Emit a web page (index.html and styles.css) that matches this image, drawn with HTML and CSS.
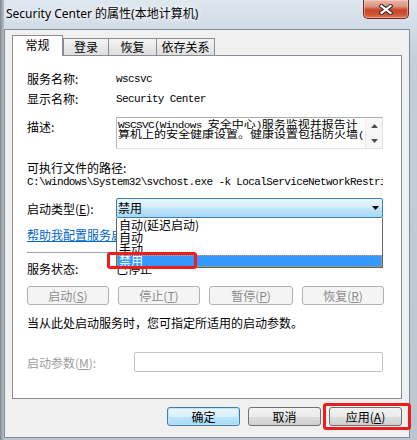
FILE: index.html
```html
<!DOCTYPE html>
<html lang="zh-CN">
<head>
<meta charset="utf-8">
<title>Security Center 的属性(本地计算机)</title>
<link rel="stylesheet" href="styles.css">
</head>
<body>
<div class="window">
  <div class="titlebar">
    <div class="title">Security Center 的属性(本地计算机)</div>
    <div class="close">
      <svg width="14" height="11" viewBox="0 0 14 11">
        <path d="M2.5 2 L11.5 9 M11.5 2 L2.5 9" stroke="#3d2a26" stroke-width="4.2" stroke-linecap="square" fill="none"/>
        <path d="M2.5 2 L11.5 9 M11.5 2 L2.5 9" stroke="#ffffff" stroke-width="2.2" stroke-linecap="square" fill="none"/>
      </svg>
    </div>
  </div>
  <div class="dialog">
    <div class="tabs">
      <div class="tab active">常规</div>
      <div class="tab t-login">登录</div>
      <div class="tab t-recover">恢复</div>
      <div class="tab t-dep">依存关系</div>
    </div>
    <div class="panel">
      <div class="row line20">
        <span class="label">服务名称:</span>
        <span class="mono">wscsvc</span>
      </div>
      <div class="row line20">
        <span class="label">显示名称:</span>
        <span class="mono">Security Center</span>
      </div>
      <div class="row r-desc">
        <span class="label">描述:</span>
        <div class="textarea">
          <div class="ta-text">
            <div class="ta-line"><span class="mono">WSCSVC(Windows </span>安全中心<span class="mono">)</span>服务监视并报告计</div>
            <div class="ta-line">算机上的安全健康设置。健康设置包括防火墙<span class="mono">(</span></div>
          </div>
          <div class="ta-scroll">
            <div class="sb-half"><svg width="7" height="4" viewBox="0 0 7 4"><path d="M0 4 L3.5 0 L7 4 Z" fill="#4d4d4d"/></svg></div>
            <div class="sb-half"><svg width="7" height="4" viewBox="0 0 7 4"><path d="M0 0 L7 0 L3.5 4 Z" fill="#4d4d4d"/></svg></div>
          </div>
        </div>
      </div>
      <div class="path-label">可执行文件的路径:</div>
      <div class="path mono">C:\windows\System32\svchost.exe -k LocalServiceNetworkRestricted</div>
      <div class="row r-start">
        <span class="label">启动类型(<u>E</u>):</span>
        <div class="combo">
          <span class="combo-val">禁用</span>
          <svg class="combo-arrow" width="7" height="4" viewBox="0 0 7 4"><path d="M0 0 L7 0 L3.5 4 Z" fill="#000"/></svg>
          <div class="droplist">
            <div class="opt first">自动(延迟启动)</div>
            <div class="opt">自动</div>
            <div class="opt">手动</div>
            <div class="opt sel">禁用<div class="mark mark-opt"></div></div>
          </div>
        </div>
      </div>
      <div class="link">帮助我配置服务启动选项。</div>
      <div class="sep"></div>
      <div class="row r-status">
        <span class="label">服务状态:</span>
        <span>已停止</span>
      </div>
      <div class="svc-btns">
        <div class="sbtn">启动(<u>S</u>)</div>
        <div class="sbtn">停止(<u>T</u>)</div>
        <div class="sbtn">暂停(<u>P</u>)</div>
        <div class="sbtn">恢复(<u>R</u>)</div>
      </div>
      <div class="hint">当从此处启动服务时，您可指定所适用的启动参数。</div>
      <div class="row r-param">
        <span class="label label-wide disabled">启动参数(<u>M</u>):</span>
        <div class="param-input"></div>
      </div>
    </div>
    <div class="footer">
      <div class="btn default">确定</div>
      <div class="btn">取消</div>
      <div class="btn apply">应用(<u>A</u>)<div class="mark mark-apply"></div></div>
    </div>
  </div>
</div>
</body>
</html>
```
FILE: styles.css
```css
* { box-sizing: border-box; }
html, body { margin: 0; padding: 0; }
body {
  width: 417px;
  height: 440px;
  overflow: hidden;
  font-family: "Noto Sans CJK SC", "Noto Sans", sans-serif;
  font-size: 12px;
  color: #000;
  background:
    linear-gradient(90deg, #80878f 0, #9ea6ae 2px, #b7bfc7 4px, transparent 4px),
    linear-gradient(180deg, #dfe7ef 0, #d2dce6 26px, #c4ced8 60px, #bdc6cf 100%);
}
.window {
  width: 417px;
  height: 440px;
  display: flex;
  flex-direction: column;
}
.titlebar {
  height: 29px;
  flex: none;
  display: flex;
  justify-content: space-between;
  align-items: flex-start;
  padding: 0 8px 0 6px;
}
.title {
  font-family: "Noto Sans", "Noto Sans CJK SC", sans-serif;
  font-size: 12px;
  line-height: 14px;
  margin-top: 7px;
  color: #000;
  text-shadow: 0 0 5px #fff, 0 0 9px #fff;
}
.close {
  width: 46px;
  height: 19px;
  border: 1px solid #6e2a1f;
  border-top: none;
  border-radius: 0 0 5px 5px;
  background: linear-gradient(180deg, #eab7aa 0, #dc9583 35%, #c9452c 55%, #cf5436 80%, #e07b55 100%);
  box-shadow: inset 0 0 0 1px rgba(255, 220, 210, 0.45);
  display: flex;
  align-items: center;
  justify-content: center;
}
.dialog {
  flex: 1;
  margin: 0 7px 2px 4px;
  background: #f0f0f0;
  border: 1px solid #7f8b98;
  padding: 5px 7px 0 7px;
  display: flex;
  flex-direction: column;
}
.tabs {
  height: 21px;
  display: flex;
  align-items: flex-end;
  flex: none;
}
.tab {
  height: 17px;
  margin-bottom: 1px;
  border: 1px solid #898c95;
  border-bottom: none;
  background: linear-gradient(180deg, #f4f4f4 0, #e9e9e9 50%, #dedede 100%);
  display: flex;
  align-items: center;
  justify-content: center;
  line-height: 14px;
  font-size: 12px;
}
.tab.active {
  width: 51px;
  height: 21px;
  margin-bottom: 0;
  background: #fff;
  padding-bottom: 3px;
  z-index: 1;
}
.t-login { width: 46px; }
.t-recover { width: 49px; margin-left: -1px; }
.t-dep { width: 59px; margin-left: -1px; }
.panel {
  width: 390px;
  height: 344px;
  margin-top: -1px;
  border: 1px solid #898c95;
  background: #fff;
  padding: 13px 18px 0 14px;
  flex: none;
}
.row {
  display: flex;
  align-items: center;
}
.label {
  width: 89px;
  flex: none;
}
.label-wide { width: 107px; }
.disabled { color: #9d9d9d; }
.line20 { height: 20px; line-height: 20px; }
.mono {
  font-family: "Liberation Mono", monospace;
  font-size: 11px;
  letter-spacing: -0.62px;
}
.r-desc {
  margin-top: 8px;
  align-items: flex-start;
}
.r-desc .label { line-height: 20px; }
.textarea {
  width: 267px;
  height: 32px;
  border: 1px solid #dbdfe6;
  border-top-color: #abadb3;
  border-left-color: #b5b8c0;
  display: flex;
  overflow: hidden;
}
.ta-text {
  flex: 1;
  padding: 1px 0 0 1px;
  overflow: hidden;
  transform: scaleY(0.83);
  transform-origin: 0 0;
}
.ta-line {
  white-space: nowrap;
  line-height: 12px;
  height: 12px;
}
.ta-scroll {
  width: 17px;
  flex: none;
  background: #f7f7f7;
  border-left: 1px solid #ececec;
  display: flex;
  flex-direction: column;
}
.sb-half {
  flex: 1;
  display: flex;
  align-items: center;
  justify-content: center;
}
.path-label {
  margin-top: 12px;
  line-height: 14px;
}
.path {
  line-height: 14px;
  white-space: nowrap;
  overflow: hidden;
}
.r-start { margin-top: 9px; }
.combo {
  position: relative;
  width: 267px;
  height: 20px;
  border: 1px solid #3c7fb1;
  border-radius: 2px;
  background: linear-gradient(180deg, #eaf6fd 0, #d6eefb 45%, #bde3f8 55%, #a6d7f3 100%);
  display: flex;
  align-items: center;
  padding: 0 3px 0 1px;
}
.combo-val {
  flex: 1;
  line-height: 14px;
}
.combo-arrow { flex: none; }
.droplist {
  position: absolute;
  left: -1px;
  top: 100%;
  margin-top: 1px;
  width: calc(100% + 2px);
  height: 50px;
  background: #fff;
  border: 1px solid #646464;
  border-top: none;
  padding-top: 1px;
  z-index: 2;
}
.opt {
  height: 12px;
  line-height: 12px;
  padding-left: 2px;
  white-space: nowrap;
}
.opt.sel {
  position: relative;
  height: 12px;
  background: #3399ff;
  color: #fff;
  outline: 1px dotted #e89a55;
  outline-offset: -1px;
}
.mark {
  position: absolute;
  border: 3px solid #ee1c1c;
  border-radius: 3px;
}
.mark-opt {
  left: -10px;
  top: -3px;
  width: 90px;
  height: 17px;
}
.link {
  margin-top: 10px;
  line-height: 14px;
  color: #0066cc;
  text-decoration: underline;
  white-space: nowrap;
}
.sep {
  margin-top: 10px;
  height: 1px;
  background: #a0a0a0;
}
.r-status {
  margin-top: 9px;
  line-height: 14px;
}
.svc-btns {
  margin-top: 10px;
  display: grid;
  grid-template-columns: 82px 82px 84px 82px;
  column-gap: 9px;
}
.sbtn {
  height: 19px;
  border: 1px solid #adb2b5;
  border-radius: 3px;
  background: #f4f4f4;
  color: #8b8b8b;
  display: flex;
  align-items: center;
  justify-content: center;
  line-height: 14px;
}
.hint {
  margin-top: 11px;
  line-height: 14px;
  white-space: nowrap;
}
.r-param {
  margin-top: 22px;
}
.param-input {
  width: 249px;
  height: 20px;
  border: 1px solid #c2c4c8;
  border-radius: 2px;
  background: #fff;
}
.footer {
  margin-top: 8px;
  display: flex;
  justify-content: flex-end;
  gap: 8px;
  flex: none;
}
.btn {
  position: relative;
  width: 73px;
  height: 19px;
  border: 1px solid #707070;
  border-radius: 3px;
  background: linear-gradient(180deg, #f2f2f2 0, #ebebeb 50%, #dddddd 51%, #cfcfcf 100%);
  display: flex;
  align-items: center;
  justify-content: center;
  line-height: 14px;
}
.btn.default {
  border-color: #3c7fb1;
  background: linear-gradient(180deg, #eaf6fd 0, #d9f0fc 50%, #bee6fd 51%, #a7d9f5 100%);
  box-shadow: inset 0 0 0 1px #bfe4f7;
}
.mark-apply {
  left: -7px;
  top: -5px;
  width: 88px;
  height: 27px;
}
```
